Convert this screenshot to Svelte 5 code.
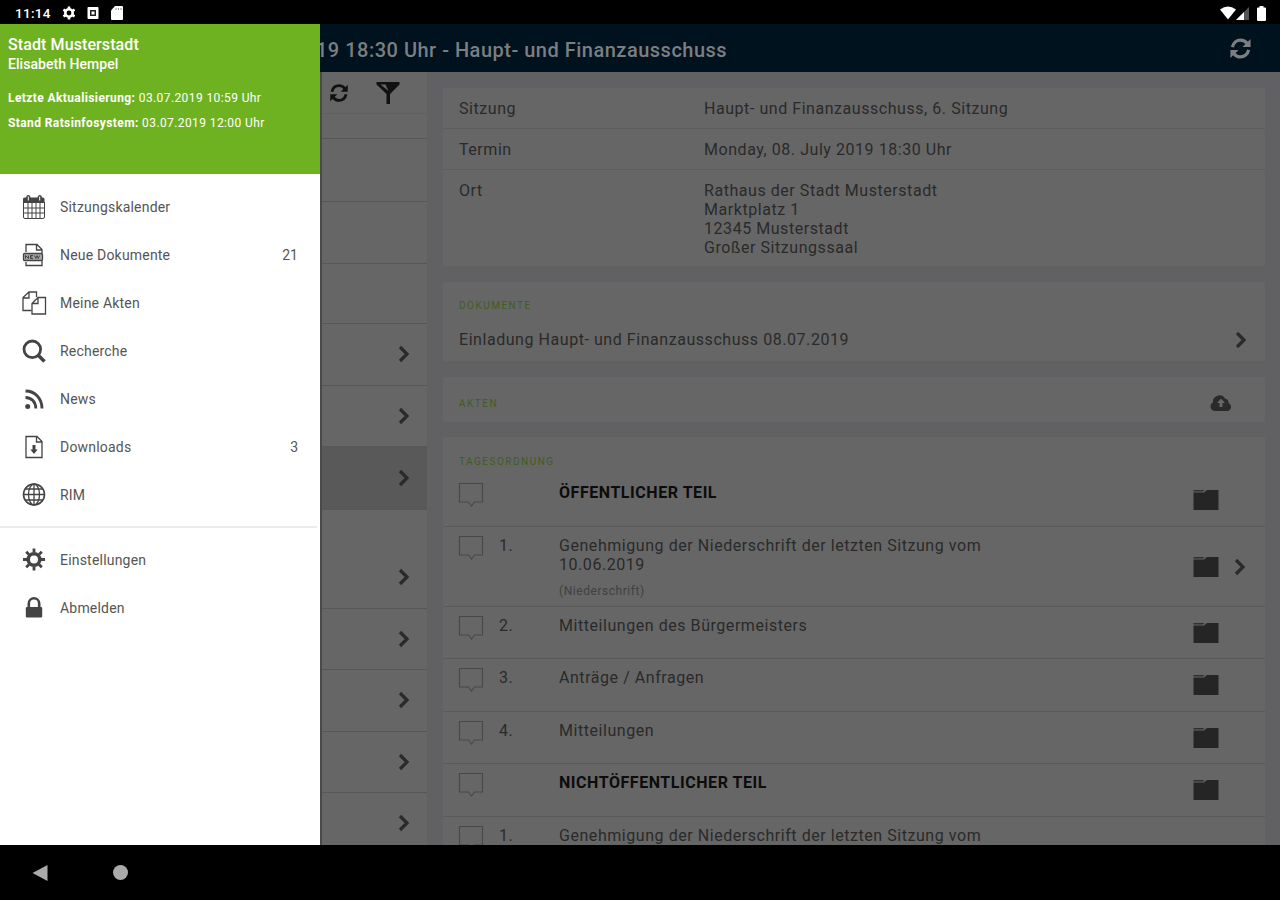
<script>
	const menu = [
		{ icon: 'calendar', label: 'Sitzungskalender' },
		{ icon: 'newdoc', label: 'Neue Dokumente', count: 21 },
		{ icon: 'files', label: 'Meine Akten' },
		{ icon: 'search', label: 'Recherche' },
		{ icon: 'rss', label: 'News' },
		{ icon: 'download', label: 'Downloads', count: 3 },
		{ icon: 'globe', label: 'RIM' }
	];
	const account = [
		{ icon: 'gear', label: 'Einstellungen' },
		{ icon: 'lock', label: 'Abmelden' }
	];

	const meetings = [
		{ height: 25 },
		{ height: 63 },
		{ height: 62 },
		{ height: 60 },
		{ height: 62, open: true },
		{ height: 61, open: true },
		{ height: 63, open: true, selected: true },
		{ height: 99, open: true, heading: true },
		{ height: 61, open: true },
		{ height: 62, open: true },
		{ height: 61, open: true },
		{ height: 62, open: true }
	];

	const agenda = [
		{ height: 53, title: 'ÖFFENTLICHER TEIL', part: true },
		{
			height: 80,
			nr: '1.',
			title: 'Genehmigung der Niederschrift der letzten Sitzung vom 10.06.2019',
			note: '(Niederschrift)',
			open: true
		},
		{ height: 52, nr: '2.', title: 'Mitteilungen des Bürgermeisters' },
		{ height: 53, nr: '3.', title: 'Anträge / Anfragen' },
		{ height: 52, nr: '4.', title: 'Mitteilungen' },
		{ height: 53, title: 'NICHTÖFFENTLICHER TEIL', part: true },
		{ height: 80, nr: '1.', title: 'Genehmigung der Niederschrift der letzten Sitzung vom' }
	];
</script>

{#snippet chevron()}
	<svg class="chevron" width="14" height="18" viewBox="0 0 14 18">
		<path d="M3 2l7 7-7 7" fill="none" stroke="currentColor" stroke-width="3.2" />
	</svg>
{/snippet}

{#snippet refresh(size)}
	<svg width={size} height={size} viewBox="0 0 24 24" fill="none" stroke="currentColor" stroke-width="3.4">
		<path d="M3.5 10.5C4.5 6 8 3.2 12 3.2c3 0 5.400 1.300 7 3.600M20.500 13.500C19.500 18 16 20.800 12 20.800c-3 0-5.400-1.300-7-3.600" />
		<path d="M22.500 2v8.500H14zM1.500 22v-8.500H10z" fill="currentColor" stroke="none" />
	</svg>
{/snippet}

{#snippet icon(name)}
	<svg class="icon" width="26" height="26" viewBox="0 0 26 26" fill="none" stroke="currentColor" stroke-width="1.3">
		{#if name === 'calendar'}
			<path d="M2.500 8v15q0 1.500 1.500 1.500h18q1.500 0 1.500-1.500V8M7 9v15M11 9v15M15 9v15M19 9v15M3 14h20M3 19h20" stroke-width="1" />
			<path d="M2 9V5q0-1.500 1.500-1.500H5q.5-3 2.500-2.500 2 0 2 2.500h7q.5-3 2.500-2.500 2 0 2 2.500h1q1.500 0 1.500 1.500v4z" fill="currentColor" stroke="none" />
			<path d="M7.300 2.500v4M18.700 2.500v4" stroke="#fff" stroke-width="1" />
		{:else if name === 'newdoc'}
			<path d="M5 10V2.500h11l5 5V11M15.500 3v5H21M5 20v3.500h16V19" />
			<rect x="2.500" y="11.500" width="19" height="7" rx="1" fill="#aaa" />
			<path d="M4.500 16.500v-3l3 3v-3M12 13.500H9.500v3H12M9.500 15h2M13.500 13.500l1.300 3 1.200-3 1.200 3 1.500-3" stroke-width="1" />
		{:else if name === 'files'}
			<path d="M10.500 20.500H2V7.500L8 2h7.500v5M8 2v6H2" />
			<path d="M11 24V13.500L17 7.500h7.500V24zM17 7.500v6h-6" />
		{:else if name === 'search'}
			<circle cx="11.300" cy="11.300" r="8.300" stroke-width="2.800" />
			<path d="M17.500 17.500l6 6" stroke-width="3.600" />
		{:else if name === 'rss'}
			<circle cx="6.700" cy="20.500" r="2.500" fill="currentColor" stroke="none" />
			<path d="M4.500 11.500c6 0 10.300 4.500 10.300 11M4.500 5C14 5 21 12.500 21 22.500" stroke-width="2.800" />
		{:else if name === 'download'}
			<path d="M5 2.500h11l5 5v16H5zM15.500 3v5H21" />
			<path d="M11.500 11h3v4.500h2.200L13 20l-3.700-4.500h2.200z" fill="currentColor" stroke="none" />
		{:else if name === 'globe'}
			<circle cx="13" cy="12.500" r="10.500" stroke-width="1.600" />
			<ellipse cx="13" cy="12.500" rx="5.500" ry="10.500" />
			<path d="M13 2v21M2.500 12.500h21M4.500 7h17M4.500 18h17" />
		{:else if name === 'gear'}
			<circle cx="13" cy="12.500" r="5.800" stroke-width="3.600" />
			<path d="M13 1.500v4M13 19.500v4M2 12.500h4M20 12.500h4M5.200 4.700L8 7.500M18 17.500l2.800 2.800M5.200 20.300L8 17.500M18 7.500l2.800-2.800" stroke-width="2.800" />
		{:else if name === 'lock'}
			<path d="M7.800 12V8.500a5.200 5.200 0 0 1 10.400 0V12" stroke-width="2.600" />
			<rect x="4.800" y="12" width="16.400" height="10.500" rx="1.200" fill="currentColor" stroke="none" />
		{/if}
	</svg>
{/snippet}

{#snippet entry(item)}
	<li class="entry">
		{@render icon(item.icon)}
		<span class="entry-label">{item.label}</span>
		{#if item.count}<span class="entry-count">{item.count}</span>{/if}
	</li>
{/snippet}

<div class="screen">
	<div class="status">
		<span class="clock">11:14</span>
		<svg width="14" height="14" viewBox="0 0 14 14" fill="none" stroke="#fff">
			<circle cx="7" cy="7" r="3.700" stroke-width="2.600" />
			<path d="M7 .5v3M7 10.500v3M1.400 3.700L4 5.200M10 8.800l2.600 1.500M1.400 10.300L4 8.800M10 5.200l2.600-1.500" stroke-width="2.600" />
		</svg>
		<svg width="12" height="14" viewBox="0 0 12 14">
			<rect x=".5" y="1" width="11" height="12" rx="1" fill="#fff" />
			<path d="M3 4h6v6H3z" fill="#222" />
			<path d="M4.500 5.500h3v3h-3z" fill="#fff" />
		</svg>
		<svg width="14" height="16" viewBox="0 0 14 16">
			<path d="M5 1h7q1 0 1 1v12q0 1-1 1H2q-1 0-1-1V5.500z" fill="#fff" />
			<path d="M6 3v2M8.500 3v2M11 3v2" stroke="#888" />
		</svg>
		<div class="signals">
			<svg width="16" height="14" viewBox="0 0 16 14"><path d="M0 3.500Q8-2.500 16 3.500L8 13.500z" fill="#fff" /></svg>
			<svg width="13" height="13" viewBox="0 0 13 13">
				<path d="M13 0v13H0z" fill="#555" />
				<path d="M8 5v8H0z" fill="#fff" />
			</svg>
			<svg class="battery" width="9" height="15" viewBox="0 0 9 15">
				<path d="M2.500 0h4v1.500H8q1 0 1 1V14q0 1-1 1H1q-1 0-1-1V2.500q0-1 1-1h1.500z" fill="#fff" />
			</svg>
		</div>
	</div>

	<div class="app">
		<aside class="drawer">
			<div class="profile">
				<div class="city">Stadt Musterstadt</div>
				<div class="user">Elisabeth Hempel</div>
				<div class="sync"><b>Letzte Aktualisierung:</b> 03.07.2019 10:59 Uhr</div>
				<div class="sync"><b>Stand Ratsinfosystem:</b> 03.07.2019 12:00 Uhr</div>
			</div>
			<ul class="menu">
				{#each menu as item}{@render entry(item)}{/each}
			</ul>
			<ul class="menu menu-account">
				{#each account as item}{@render entry(item)}{/each}
			</ul>
		</aside>

		<div class="content">
			<header class="titlebar">
				<h1>19 18:30 Uhr - Haupt- und Finanzausschuss</h1>
				{@render refresh(23)}
			</header>

			<div class="panes">
				<div class="meetings">
					<div class="toolbar">
						{@render refresh(20)}
						<svg width="24" height="24" viewBox="0 0 24 24">
							<path d="M.5 1h23v2.500L14 13v10h-3.500V13L.5 3.500z" fill="currentColor" />
							<path d="M4.500 3.500h5l3 6.500z" fill="#666" />
						</svg>
					</div>
					{#each meetings as meeting}
						<div
							class="meeting"
							class:selected={meeting.selected}
							class:heading={meeting.heading}
							style="height: {meeting.height}px"
						>
							{#if meeting.open}{@render chevron()}{/if}
						</div>
					{/each}
				</div>

				<main class="detail">
					<section class="card">
						<div class="fact"><span>Sitzung</span><span>Haupt- und Finanzausschuss, 6. Sitzung</span></div>
						<div class="fact"><span>Termin</span><span>Monday, 08. July 2019 18:30 Uhr</span></div>
						<div class="fact">
							<span>Ort</span>
							<span>Rathaus der Stadt Musterstadt<br />Marktplatz 1<br />12345 Musterstadt<br />Großer Sitzungssaal</span>
						</div>
					</section>

					<section class="card documents">
						<h2>DOKUMENTE</h2>
						<div class="document">
							<span>Einladung Haupt- und Finanzausschuss 08.07.2019</span>
							{@render chevron()}
						</div>
					</section>

					<section class="card files">
						<h2>AKTEN</h2>
						<svg width="22" height="18" viewBox="0 0 22 18">
							<path d="M5 17a4.500 4.500 0 0 1-2-8.500A6.500 6.500 0 0 1 15 4.500a4 4 0 0 1 3.500 4.500A4.200 4.200 0 0 1 17.500 17z" fill="#2a2a2a" />
							<path d="M11 4.500l4 4.500h-2.500v4h-3V9H7z" fill="#666" />
						</svg>
					</section>

					<section class="card agenda">
						<h2>TAGESORDNUNG</h2>
						{#each agenda as item}
							<div class="item" class:part={item.part} style="height: {item.height}px">
								<svg class="bubble" width="26" height="26" viewBox="0 0 26 26">
									<path d="M1.500 1.500h23V20h-8l-3 4-3-4h-9z" fill="none" stroke="#484848" stroke-width="1.100" />
								</svg>
								<span class="nr">{item.nr ?? ''}</span>
								<div class="item-text">
									{item.title}
									{#if item.note}<small>{item.note}</small>{/if}
								</div>
								<svg class="folder" width="26" height="22" viewBox="0 0 26 22">
									<path d="M.5 3.500H11L14 1h11.500v20H.5z" fill="#252525" />
									<path d="M.5 1h11l-1.500 1.500H.5z" fill="#303030" />
								</svg>
								<div class="item-open">{#if item.open}{@render chevron()}{/if}</div>
							</div>
						{/each}
					</section>
				</main>
			</div>
		</div>
	</div>

	<div class="navbar">
		<svg width="16" height="18" viewBox="0 0 16 18"><path d="M15.500 1v16L.5 9z" fill="#aaa" /></svg>
		<span class="home"></span>
	</div>
</div>

<style>
	:global(body) {
		margin: 0;
		background: #000;
	}
	.screen {
		display: flex;
		flex-direction: column;
		width: 1280px;
		height: 900px;
		overflow: hidden;
		background: #000;
		font-family: Roboto, sans-serif;
	}
	.screen :global(svg) {
		display: block;
		flex: none;
	}
	.status {
		display: flex;
		align-items: center;
		height: 24px;
		padding: 2px 14px 0 15px;
		box-sizing: border-box;
		color: #fff;
		gap: 11px;
	}
	.clock {
		width: 36px;
		font-size: 13.500px;
		font-weight: 500;
		letter-spacing: 0.3px;
	}
	.signals {
		display: flex;
		align-items: center;
		margin-left: auto;
	}
	.battery {
		margin-left: 8px;
	}
	.app {
		display: flex;
		height: 821px;
		overflow: hidden;
	}
	.drawer {
		position: relative;
		z-index: 1;
		width: 320px;
		flex: none;
		background: #fff;
	}
	.profile {
		height: 150px;
		padding: 10px 8px 0;
		box-sizing: border-box;
		background: #6fb221;
		color: #fff;
		white-space: nowrap;
	}
	.city {
		font-size: 16px;
		font-weight: 500;
		line-height: 21px;
		letter-spacing: 0.1px;
	}
	.user {
		margin-bottom: 12px;
		font-size: 14px;
		font-weight: 500;
		line-height: 19px;
		letter-spacing: 0.05px;
	}
	.sync {
		font-size: 12px;
		line-height: 25px;
		letter-spacing: 0.4px;
	}
	.sync b {
		font-weight: 700;
	}
	.menu {
		margin: 0;
		padding: 9px 0 7px;
		list-style: none;
	}
	.menu-account {
		width: 317px;
		padding-top: 8px;
		border-top: 2px solid #ececec;
	}
	.entry {
		display: flex;
		align-items: center;
		height: 48px;
		padding: 0 22px 0 21px;
		color: #444;
	}
	.entry-label {
		margin-left: 13px;
		font-size: 14px;
		color: #555;
		letter-spacing: 0.2px;
	}
	.entry-count {
		margin-left: auto;
		font-size: 14px;
		color: #555;
	}
	.content {
		display: flex;
		flex: 1;
		flex-direction: column;
		min-width: 0;
		color: #2a2a2a;
	}
	.titlebar {
		display: flex;
		align-items: center;
		justify-content: space-between;
		height: 48px;
		flex: none;
		padding-right: 28px;
		background: #00121d;
		color: #7b7e82;
	}
	.titlebar h1 {
		margin: 4px 0 0 -4px;
		font-size: 20px;
		font-weight: 500;
		letter-spacing: 0.5px;
		white-space: nowrap;
	}
	.panes {
		display: flex;
		flex: 1;
		min-height: 0;
		background: #616164;
	}
	.meetings {
		width: 107px;
		flex: none;
		box-sizing: border-box;
		border-left: 2px solid #4a4a4a;
		background: #666;
		overflow: hidden;
	}
	.toolbar {
		display: flex;
		align-items: center;
		gap: 27px;
		height: 42px;
		padding-left: 7px;
		box-sizing: border-box;
		border-bottom: 1px solid #606060;
		color: #111;
	}
	.meeting {
		display: flex;
		align-items: center;
		justify-content: flex-end;
		padding: 0 16px 1px 0;
		box-sizing: border-box;
		border-bottom: 1px solid #575757;
	}
	.meeting.heading {
		padding-top: 36px;
	}
	.meeting.selected {
		background: #595959;
	}
	.detail {
		display: flex;
		flex: 1;
		flex-direction: column;
		gap: 16px;
		padding: 16px 15px 0 16px;
		font-size: 16px;
		line-height: 19px;
		letter-spacing: 0.55px;
	}
	.card {
		flex: none;
		background: #666;
	}
	.fact {
		display: grid;
		grid-template-columns: 245px 1fr;
		padding: 11px 16px 10px;
		border-bottom: 1px solid #5c5c5c;
	}
	.fact:last-child {
		padding-bottom: 9px;
		border: 0;
	}
	h2 {
		margin: 0;
		font-size: 10px;
		font-weight: 400;
		line-height: 14px;
		letter-spacing: 1.500px;
		color: #405d1e;
	}
	.documents {
		height: 79px;
		padding: 17px 17px 0 16px;
		box-sizing: border-box;
	}
	.document {
		display: flex;
		align-items: center;
		justify-content: space-between;
		margin-top: 17px;
	}
	.files {
		display: flex;
		align-items: center;
		justify-content: space-between;
		height: 45px;
		padding: 6px 33px 0 16px;
		box-sizing: border-box;
	}
	.files h2 {
		padding-top: 3px;
	}
	.agenda {
		margin-top: -1px;
		padding-top: 18px;
	}
	.agenda h2 {
		padding: 0 16px 5px;
	}
	.item {
		display: flex;
		box-sizing: border-box;
		padding: 9px 18px 0 15px;
		border-bottom: 1px solid #5a5a5a;
	}
	.bubble {
		margin-top: -1px;
	}
	.nr {
		width: 60px;
		margin-left: 15px;
	}
	.item-text {
		width: 440px;
	}
	.part .item-text {
		font-weight: 700;
		color: #0c0c0c;
	}
	.item-text small {
		display: block;
		margin-top: 8px;
		font-size: 12px;
		color: #414141;
	}
	.folder {
		align-self: center;
		margin: -9px 0 0 auto;
	}
	.item-open {
		display: flex;
		align-items: center;
		width: 14px;
		margin: -9px 0 0 14px;
	}
	.navbar {
		display: flex;
		align-items: center;
		gap: 65px;
		height: 55px;
		padding-left: 32px;
	}
	.home {
		width: 15px;
		height: 15px;
		border-radius: 50%;
		background: #aaa;
	}
</style>
